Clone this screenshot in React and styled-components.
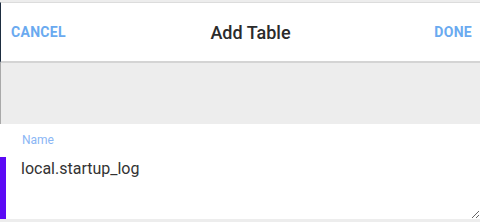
import React from 'react';
import styled, { createGlobalStyle } from 'styled-components';

const Global = createGlobalStyle`
  html, body { margin: 0; padding: 0; background: #fff; }
  body { font-family: Roboto, "Liberation Sans", sans-serif; }
`;

const Page = styled.div`
  width: 480px;
  height: 222px;
  padding-top: 2px;
  box-sizing: border-box;
  display: flex;
  flex-direction: column;
  overflow: hidden;
  background: #ededed;
`;

const Header = styled.div`
  height: 58px;
  border-top: 1px solid #dcdcdc;
  border-bottom: 2px solid #d4d4d4;
  border-left: 1px solid #1d2d40;
  background: #fff;
  display: flex;
  align-items: center;
  justify-content: space-between;
  padding: 0 8px 0 10px;
  position: relative;
`;

const Action = styled.button`
  border: 0;
  background: none;
  padding: 0;
  font-family: inherit;
  font-size: 14px;
  font-weight: 700;
  letter-spacing: 0.3px;
  color: #6aaaf0;
  cursor: pointer;
`;

const Title = styled.div`
  position: absolute;
  left: 20px;
  right: 0;
  text-align: center;
  pointer-events: none;
  font-size: 18px;
  font-weight: 500;
  color: #2b2b2b;
`;

const Spacer = styled.div`
  height: 61px;
  border-left: 1px solid #a9a9a9;
`;

const Panel = styled.div`
  height: 95px;
  background: #fff;
  display: flex;
  flex-direction: column;
`;

const Label = styled.label`
  font-size: 12px;
  color: #8ab6f5;
  padding: 9px 0 0 22px;
  height: 24px;
  box-sizing: border-box;
`;

const Field = styled.div`
  flex: 1;
  display: flex;
  min-height: 0;
`;

const Bar = styled.div`
  width: 6px;
  margin-top: 9px;
  background: #5b0af5;
`;

const Input = styled.textarea`
  flex: 1;
  border: 0;
  outline: none;
  resize: both;
  padding: 11px 0 0 15px;
  font-family: inherit;
  font-size: 16px;
  color: #333;
  caret-color: #222;
  background: #fff;
`;

export default function App() {
  return (
    <>
      <Global />
      <Page>
        <Header>
          <Action>CANCEL</Action>
          <Title>Add Table</Title>
          <Action>DONE</Action>
        </Header>
        <Spacer />
        <Panel>
          <Label>Name</Label>
          <Field>
            <Bar />
            <Input defaultValue="local.startup_log" autoFocus />
          </Field>
        </Panel>
      </Page>
    </>
  );
}
